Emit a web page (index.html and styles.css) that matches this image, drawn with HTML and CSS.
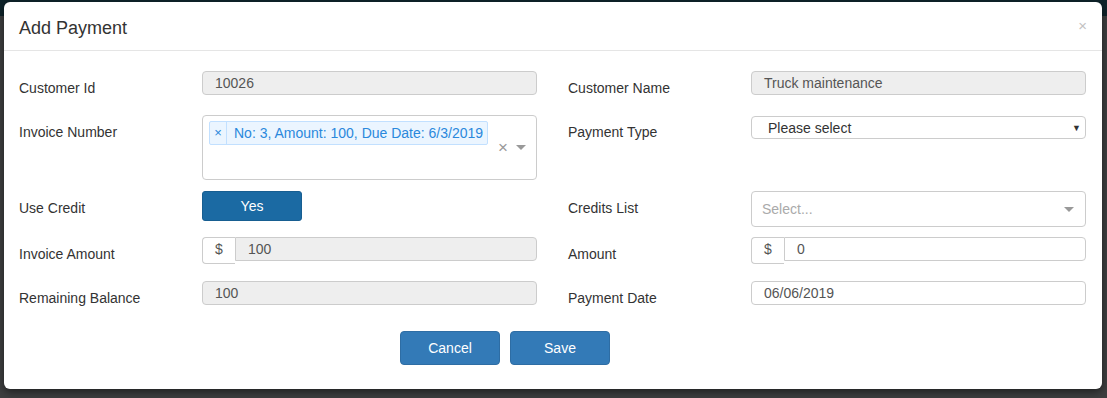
FILE: index.html
```html
<!DOCTYPE html>
<html>
<head>
<meta charset="utf-8">
<link rel="stylesheet" href="styles.css">
</head>
<body>
<div class="topbar"></div>
<div class="modal">
  <div class="modal-header">
    <h4 class="modal-title">Add Payment</h4>
    <span class="close">×</span>
  </div>
  <div class="modal-body">
    <div class="form-grid">
      <div class="group">
        <label class="lbl">Customer Id</label>
        <div class="field"><div class="input readonly">10026</div></div>
      </div>
      <div class="group">
        <label class="lbl">Customer Name</label>
        <div class="field"><div class="input readonly">Truck maintenance</div></div>
      </div>

      <div class="group">
        <label class="lbl">Invoice Number</label>
        <div class="field">
          <div class="multi">
            <div class="tags">
              <span class="tag"><span class="tag-x">×</span><span class="tag-label">No: 3, Amount: 100, Due Date: 6/3/2019</span></span>
            </div>
            <span class="clear">×</span>
            <span class="caret"></span>
          </div>
        </div>
      </div>
      <div class="group">
        <label class="lbl">Payment Type</label>
        <div class="field">
          <div class="native-select"><span>Please select</span><span class="tri">▼</span></div>
        </div>
      </div>

      <div class="group">
        <label class="lbl">Use Credit</label>
        <div class="field"><button class="btn-yes">Yes</button></div>
      </div>
      <div class="group">
        <label class="lbl">Credits List</label>
        <div class="field">
          <div class="rselect"><span class="placeholder">Select...</span><span class="caret"></span></div>
        </div>
      </div>

      <div class="group">
        <label class="lbl">Invoice Amount</label>
        <div class="field">
          <div class="input-group"><span class="addon">$</span><div class="input readonly grouped">100</div></div>
        </div>
      </div>
      <div class="group">
        <label class="lbl">Amount</label>
        <div class="field">
          <div class="input-group"><span class="addon">$</span><div class="input grouped">0</div></div>
        </div>
      </div>

      <div class="group">
        <label class="lbl">Remaining Balance</label>
        <div class="field"><div class="input readonly">100</div></div>
      </div>
      <div class="group">
        <label class="lbl">Payment Date</label>
        <div class="field"><div class="input">06/06/2019</div></div>
      </div>
    </div>
    <div class="actions">
      <button class="btn">Cancel</button>
      <button class="btn">Save</button>
    </div>
  </div>
</div>
</body>
</html>
```

FILE: styles.css
```css
* { box-sizing: border-box; }
html, body { margin: 0; padding: 0; }
body {
  width: 1107px;
  height: 398px;
  overflow: hidden;
  background: #3e3f40;
  font-family: "Liberation Sans", Arial, sans-serif;
  font-size: 14px;
  color: #333;
  position: relative;
}
.topbar {
  position: absolute;
  left: 0; top: 0;
  width: 1107px;
  height: 16px;
  background: #0f242b;
}
.modal {
  position: relative;
  margin: 2px 0 0 4px;
  width: 1098px;
  height: 387px;
  background: #fff;
  border-radius: 6px;
  box-shadow: 0 3px 9px rgba(0,0,0,0.5);
}
.modal-header {
  height: 49px;
  border-bottom: 1px solid #e5e5e5;
  display: flex;
  align-items: center;
  justify-content: space-between;
  padding: 0 15px 0 15px;
}
.modal-title {
  margin: 0;
  font-size: 18px;
  font-weight: normal;
  color: #333;
  line-height: 20px;
  padding-top: 3px;
}
.close {
  color: #c2c2c2;
  font-size: 15px;
  line-height: 1;
  margin-top: -2px;
}
.modal-body {
  padding: 20px 16px 0 15px;
}
.form-grid {
  display: grid;
  grid-template-columns: 518px 518px;
  column-gap: 31px;
  grid-template-rows: 44px 76px 46px 44px 50px;
}
.group {
  display: flex;
  align-items: flex-start;
}
.lbl {
  width: 183px;
  flex: none;
  padding-top: 7px;
  line-height: 20px;
  color: #333;
}
.field { flex: 1; }
.input {
  height: 24px;
  border: 1px solid #ccc;
  border-radius: 4px;
  padding: 0 12px;
  line-height: 22px;
  color: #555;
  background: #fff;
}
.input.readonly { background: #eee; }
.input-group { display: flex; align-items: flex-start; }
.addon {
  width: 33px;
  height: 27px;
  flex: none;
  border: 1px solid #ccc;
  border-right: none;
  border-radius: 4px 0 0 4px;
  color: #555;
  padding-left: 12px;
  line-height: 22px;
  background: #fff;
}
.input.grouped {
  flex: 1;
  border-radius: 0 4px 4px 0;
}
.multi {
  height: 65px;
  border: 1px solid #ccc;
  border-radius: 4px;
  display: flex;
  align-items: center;
  padding: 0 0 0 6px;
}
.tags { flex: 1; align-self: flex-start; padding-top: 5px; }
.tag {
  display: inline-flex;
  height: 24px;
  background: #ebf5ff;
  border: 1px solid #c2e0ff;
  border-radius: 2px;
  color: #2a88dc;
  line-height: 22px;
}
.tag-x {
  width: 17px;
  text-align: center;
  border-right: 1px solid #c2e0ff;
  font-size: 13px;
}
.tag-label { padding: 0 4px 0 7px; }
.clear {
  color: #999;
  font-size: 17px;
  width: 18px;
  text-align: center;
  margin-right: 1px;
}
.caret {
  display: inline-block;
  width: 0; height: 0;
  border-left: 5px solid transparent;
  border-right: 5px solid transparent;
  border-top: 5px solid #999;
  margin: 0 10px 0 3px;
}
.native-select {
  height: 23px;
  margin-top: 1px;
  border: 1px solid #ccc;
  border-radius: 4px;
  display: flex;
  align-items: center;
  justify-content: space-between;
  padding: 0 4px 0 16px;
  color: #333;
}
.tri { font-size: 9px; color: #333; }
.rselect {
  height: 36px;
  border: 1px solid #ccc;
  border-radius: 4px;
  display: flex;
  align-items: center;
  justify-content: space-between;
  padding-left: 10px;
}
.placeholder { color: #aaa; }
.rselect .caret { margin-right: 11px; }
.btn-yes {
  width: 100px;
  height: 30px;
  background: #1b6aa3;
  border: 1px solid #175e91;
  border-radius: 3px;
  color: #fff;
  font-family: inherit;
  font-size: 14px;
  padding: 0;
}
.actions {
  display: flex;
  gap: 10px;
  padding-left: 381px;
  margin-top: 0;
}
.btn {
  width: 100px;
  height: 34px;
  background: #337ab7;
  border: 1px solid #2e6da4;
  border-radius: 4px;
  color: #fff;
  font-family: inherit;
  font-size: 14px;
  padding: 0;
}
```
